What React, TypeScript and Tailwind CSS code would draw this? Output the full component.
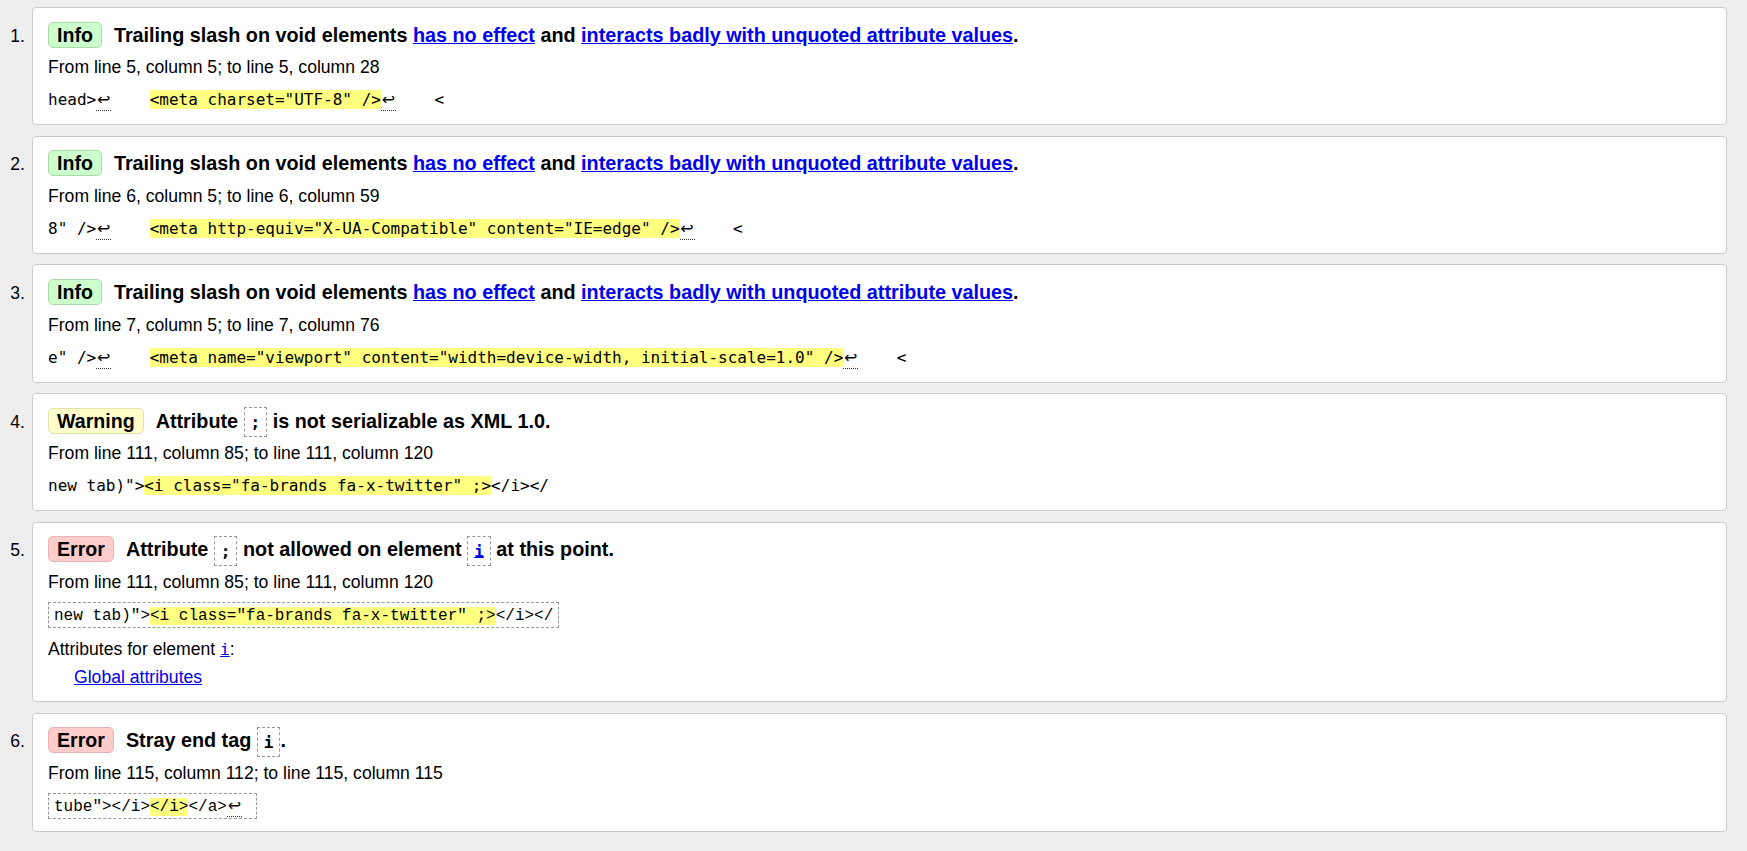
import type { ReactNode } from "react";

type Kind = "info" | "warning" | "error";

interface Message {
  kind: Kind;
  heading: ReactNode;
  location: string;
  extract: ReactNode;
  boxed?: boolean;
  extra?: ReactNode;
}

const badgeClass: Record<Kind, string> = {
  info: "bg-[#ccffcc] border-[#aad9aa]",
  warning: "bg-[#ffffcc] border-[#e2e2aa]",
  error: "bg-[#ffcccc] border-[#e6b4b4]",
};

const badgeLabel: Record<Kind, string> = {
  info: "Info",
  warning: "Warning",
  error: "Error",
};

const mono = "font-['DejaVu_Sans_Mono',monospace]";

function Hl({ children }: { children: ReactNode }) {
  return <b className="font-normal bg-[#ffff80]">{children}</b>;
}

// line-break marker shown in the source extract
function Ret() {
  return (
    <span className="inline-block w-[15px] text-center text-[16px] leading-none pb-[2px] border-b border-dotted border-[#333] font-['DejaVu_Sans',sans-serif]">
      ↩
    </span>
  );
}

function Tag({ children, link }: { children: ReactNode; link?: boolean }) {
  return (
    <code
      className={`${mono} text-[16px] font-bold leading-none px-[6px] py-[4.5px] border border-dashed border-[#999] ${
        link ? "text-[#0000ee] underline" : ""
      }`}
    >
      {children}
    </code>
  );
}

function A({ children }: { children: ReactNode }) {
  return (
    <a href="#" className="text-[#0000ee] underline">
      {children}
    </a>
  );
}

const slashHeading = (
  <>
    Trailing slash on void elements <A>has no effect</A> and{" "}
    <A>interacts badly with unquoted attribute values</A>.
  </>
);

const twitter = (
  <>
    {'new tab)">'}
    <Hl>{'<i class="fa-brands fa-x-twitter" ;>'}</Hl>
    {"</i></"}
  </>
);

const messages: Message[] = [
  {
    kind: "info",
    heading: slashHeading,
    location: "From line 5, column 5; to line 5, column 28",
    extract: (
      <>
        head&gt;
        <Ret />
        {"    "}
        <Hl>{'<meta charset="UTF-8" />'}</Hl>
        <Ret />
        {"    <"}
      </>
    ),
  },
  {
    kind: "info",
    heading: slashHeading,
    location: "From line 6, column 5; to line 6, column 59",
    extract: (
      <>
        {'8" />'}
        <Ret />
        {"    "}
        <Hl>{'<meta http-equiv="X-UA-Compatible" content="IE=edge" />'}</Hl>
        <Ret />
        {"    <"}
      </>
    ),
  },
  {
    kind: "info",
    heading: slashHeading,
    location: "From line 7, column 5; to line 7, column 76",
    extract: (
      <>
        {'e" />'}
        <Ret />
        {"    "}
        <Hl>
          {'<meta name="viewport" content="width=device-width, initial-scale=1.0" />'}
        </Hl>
        <Ret />
        {"    <"}
      </>
    ),
  },
  {
    kind: "warning",
    heading: (
      <>
        Attribute <Tag>;</Tag> is not serializable as XML 1.0.
      </>
    ),
    location: "From line 111, column 85; to line 111, column 120",
    extract: twitter,
  },
  {
    kind: "error",
    heading: (
      <>
        Attribute <Tag>;</Tag> not allowed on element <Tag link>i</Tag> at
        this point.
      </>
    ),
    location: "From line 111, column 85; to line 111, column 120",
    extract: twitter,
    boxed: true,
    extra: (
      <>
        <p className="mt-[11.4px] text-[17.6px] leading-[22px]">
          Attributes for element{" "}
          <a href="#" className={`${mono} text-[16px] text-[#0000ee] underline`}>
            i
          </a>
          :
        </p>
        <p className="mt-[4.7px] ml-[26px] text-[17.6px] leading-[22px]">
          <A>Global attributes</A>
        </p>
      </>
    ),
  },
  {
    kind: "error",
    heading: (
      <>
        Stray end tag <Tag>i</Tag>.
      </>
    ),
    location: "From line 115, column 112; to line 115, column 115",
    extract: (
      <>
        {'tube"></i>'}
        <Hl>{"</i>"}</Hl>
        {"</a>"}
        <Ret />
        {" "}
      </>
    ),
    boxed: true,
  },
];

export default function App() {
  return (
    <div className="min-h-screen bg-[#eeeeee] pt-[7px] text-black font-['Liberation_Sans',Arial,sans-serif]">
      <ol className="flex flex-col gap-[10.5px]">
        {messages.map((m, i) => (
          <li key={i} className="flex items-baseline">
            <span className="w-[32px] shrink-0 pr-[7px] text-right text-[17.6px] leading-[22px]">
              {i + 1}.
            </span>
            <div className="flex-1 mr-[20px] min-w-0 bg-white border border-[#cccccc] rounded-[4px] pl-[15px] pr-[15px] pt-[13.5px] pb-[13px]">
              <p className="text-[19.8px] font-bold leading-[26px]">
                <span
                  className={`inline-block mr-[12px] px-[8px] py-px leading-[22px] text-[19.6px] border rounded-[5px] ${badgeClass[m.kind]}`}
                >
                  {badgeLabel[m.kind]}
                </span>
                {m.heading}
              </p>
              <p className="mt-[8.7px] text-[17.6px] leading-[22px]">{m.location}</p>
              <p className={`mt-[11px] ${mono} text-[16px] leading-[22px] whitespace-pre`}>
                {m.boxed ? (
                  <code className="px-[5px] pt-[3.5px] pb-[2px] border border-dashed border-[#999]">
                    {m.extract}
                  </code>
                ) : (
                  m.extract
                )}
              </p>
              {m.extra}
            </div>
          </li>
        ))}
      </ol>
    </div>
  );
}
